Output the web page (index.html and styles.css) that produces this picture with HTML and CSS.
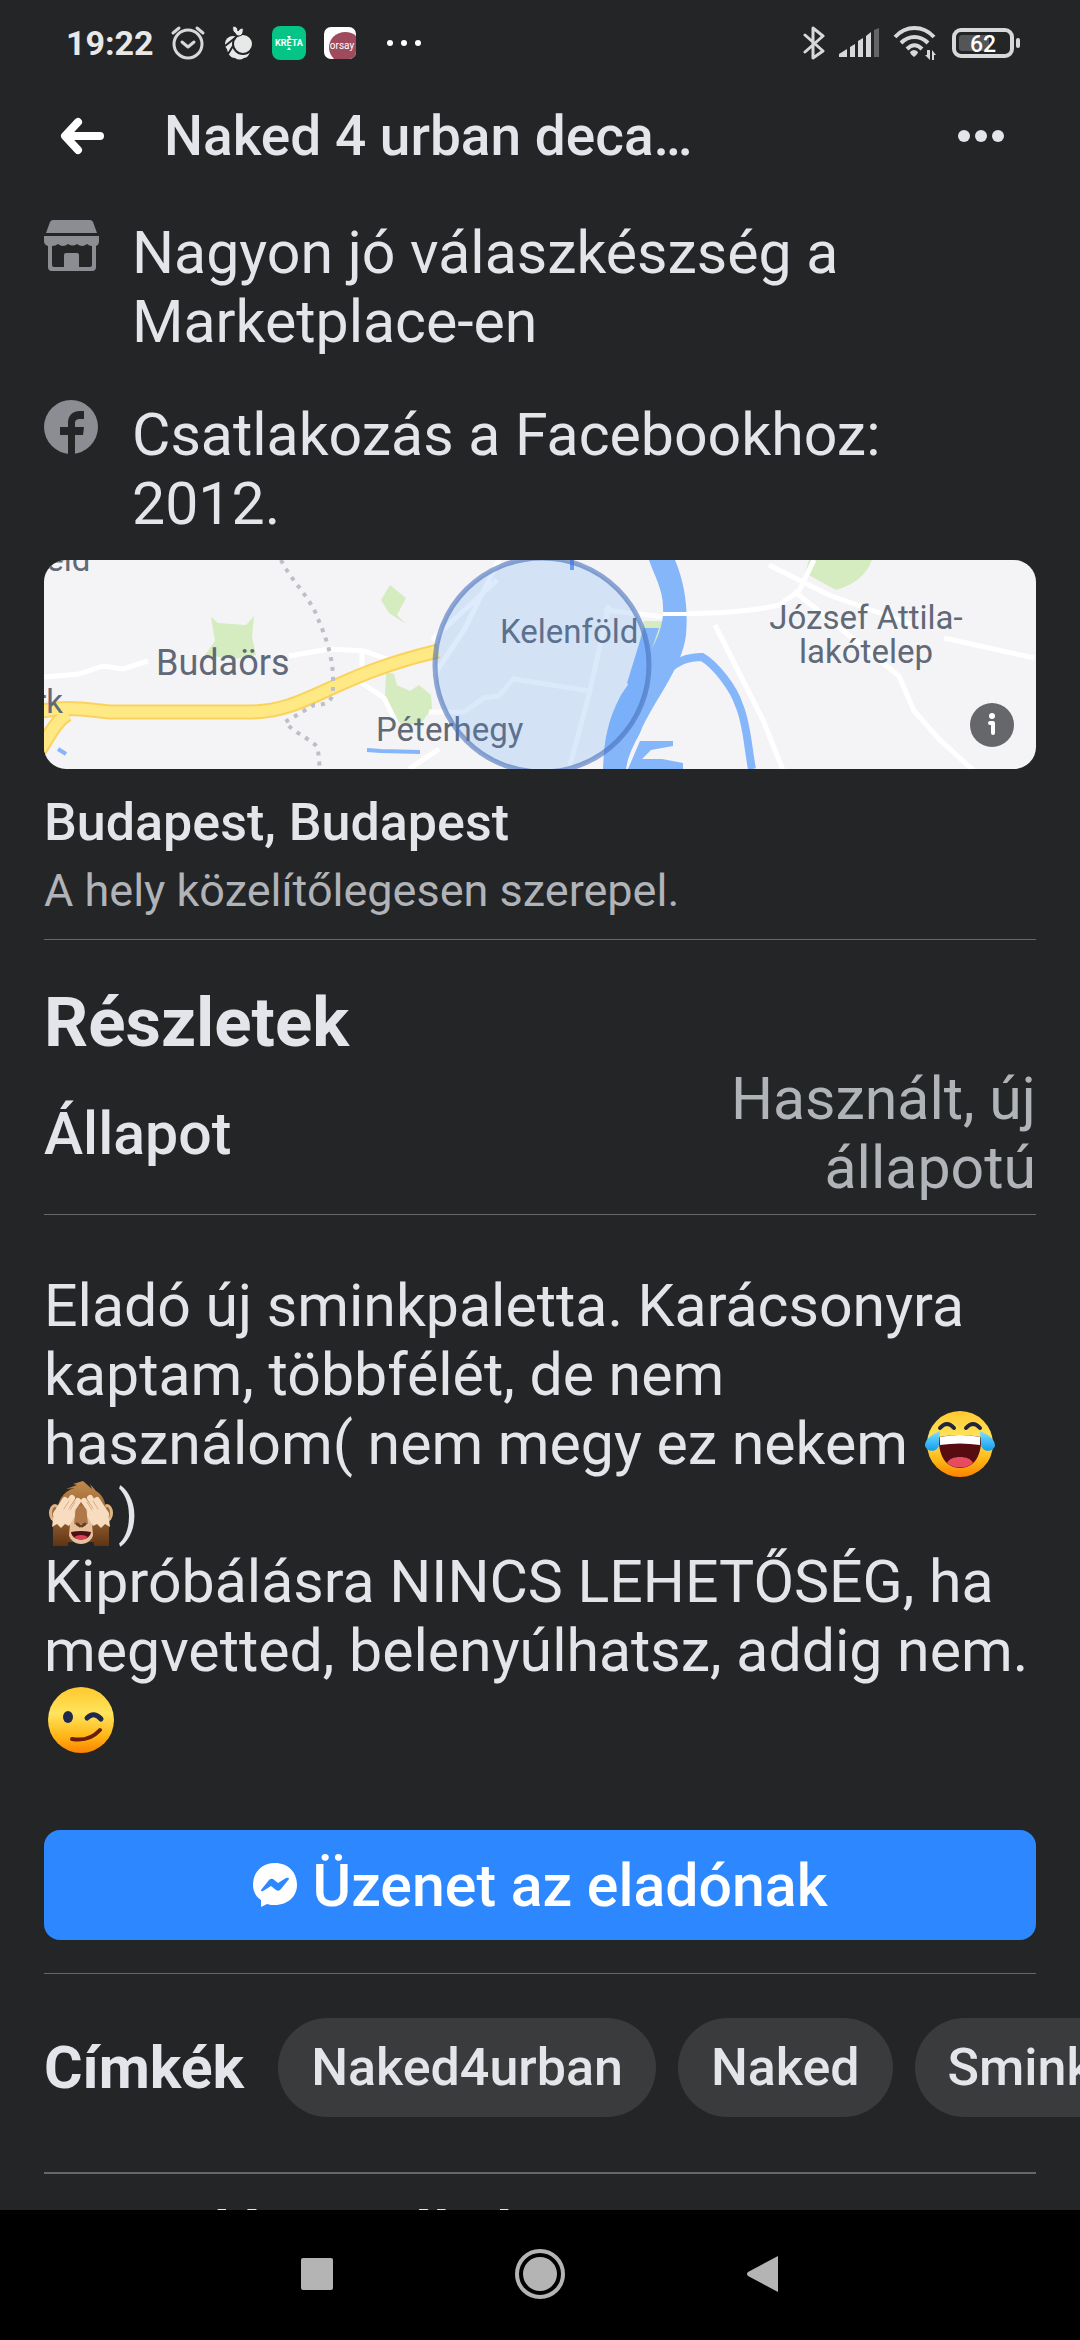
FILE: index.html
```html
<!DOCTYPE html>
<html lang="hu">
<head>
  <meta charset="UTF-8">
  <meta name="viewport" content="width=device-width, initial-scale=1">
  <title>Naked 4 urban decay</title>
  <link rel="stylesheet" href="styles.css">
</head>
<body>

  <div class="statusbar">
    <span class="clock">19:22</span>
    <svg class="alarm" viewBox="0 0 36 36" width="36" height="36" fill="none" stroke="#d8d8d8" stroke-width="3" stroke-linecap="round" stroke-linejoin="round">
      <circle cx="18" cy="19" r="14"/>
      <path d="M12 17l6 5 6-5M3 8l6-5M33 8l-6-5"/>
    </svg>
    <svg class="fruit" viewBox="0 0 28 34" width="28" height="34">
      <g fill="#e8e8e8">
        <circle cx="9" cy="18" r="8"/>
        <path d="M3 21c0 6 3 11 8 11 3 2 6 2 9 0 3 0 5-3 6-6z"/>
        <circle cx="19" cy="18" r="10" stroke="#242526" stroke-width="2"/>
        <path d="M9 0c3 0 5 2 5 5 1-2 3-3 5-3 1 4-1 8-4 8-2 0-3-1-4-3C9 6 8 3 9 0z" stroke="#242526" stroke-width="1"/>
      </g>
      <path d="M11 12L1 20M9 20l-5 8" fill="none" stroke="#242526" stroke-width="2"/>
    </svg>
    <svg class="app" viewBox="0 0 34 34" width="34" height="34">
      <rect width="34" height="34" rx="8" fill="#04c586"/>
      <text class="kreta" x="17" y="20" text-anchor="middle">KRÉTA</text>
      <path d="M15 10h4l-2 3zM17 21l2 3h-4z" fill="#fff"/>
    </svg>
    <svg class="app" viewBox="0 0 32 32" width="32" height="32">
      <defs><clipPath id="orsayClip"><rect width="32" height="32" rx="7"/></clipPath></defs>
      <g clip-path="url(#orsayClip)">
        <rect width="32" height="32" fill="#fff"/>
        <path d="M32 9C27 4 16 3 9 10c-6 7-5 16 1 22h22z" fill="#a04b5d"/>
        <text class="orsay" x="18" y="22" text-anchor="middle">orsay</text>
      </g>
    </svg>
    <svg class="more" viewBox="0 0 36 8" width="36" height="8" fill="#fff">
      <circle cx="4" cy="4" r="3"/><circle cx="18" cy="4" r="3"/><circle cx="32" cy="4" r="3"/>
    </svg>

    <span class="spacer"></span>

    <svg viewBox="0 0 22 34" width="22" height="34" fill="none" stroke="#d8d8d8" stroke-width="3" stroke-linejoin="round" stroke-linecap="round">
      <path d="M2 9l18 16-10 7V2l10 8L2 26"/>
    </svg>
    <svg viewBox="0 0 40 30" width="40" height="30" fill="#d8d8d8">
      <path d="M0 26l8-5v8H0zM11 19l5-3v13h-5zM19 13l5-3v19h-5zM27 8l5-4v25h-5z"/>
      <path d="M35 2l5-2v29h-5z" fill="#646567"/>
    </svg>
    <svg viewBox="0 0 43 34" width="43" height="34" fill="none" stroke="#d8d8d8" stroke-width="4">
      <path d="M2 11C13-1 30-1 41 11M8 17c8-8 19-8 27 0M14 23c5-5 10-5 15 0"/>
      <path d="M17 26q4-4 8 0 0 2-4 5-4-3-4-5z" fill="#d8d8d8" stroke="none"/>
      <path d="M34 24h3v10l-5-5h2zM39 34V24l4 5h-2v5z" fill="#d8d8d8" stroke="none"/>
    </svg>
    <svg class="battery" viewBox="0 0 68 30" width="68" height="30">
      <rect x="2" y="2" width="58" height="26" rx="7" fill="none" stroke="#d8d8d8" stroke-width="4"/>
      <rect x="7" y="7" width="30" height="16" rx="3" fill="#545557"/>
      <rect x="64" y="10" width="4" height="10" rx="2" fill="#d8d8d8"/>
      <text class="level" x="31" y="24" text-anchor="middle">62</text>
    </svg>
  </div>

  <header class="topbar">
    <button class="icon-btn" aria-label="Vissza">
      <svg viewBox="0 0 44 38" width="44" height="38" fill="none" stroke="#fff" stroke-width="8" stroke-linecap="round" stroke-linejoin="round">
        <path d="M40 19H8M18 5L5 19l13 14"/>
      </svg>
    </button>
    <h1>Naked 4 urban deca…</h1>
    <button class="icon-btn" aria-label="Továbbiak">
      <svg viewBox="0 0 46 12" width="46" height="12" fill="#e4e4eb">
        <circle cx="6" cy="6" r="6"/><circle cx="23" cy="6" r="6"/><circle cx="40" cy="6" r="6"/>
      </svg>
    </button>
  </header>

  <main>
    <ul class="seller">
      <li>
        <svg viewBox="0 0 55 55" width="55" height="55" fill="#8b8d92">
          <path d="M9 2h37q2 0 3 2l4 11H2L6 4q1-2 3-2zM0 18h55v5q0 4-3 5v21q0 4-4 4H8q-4 0-4-4V28q-4-1-4-5z"/>
          <path d="M8 28q4 0 6-2 5 4 10 0 5 3 9 0 5 4 10 0 2 2 5 2v19q0 2-2 2H35V37q0-2-2-2H22q-2 0-2 2v12H10q-2 0-2-2z" fill="#242526"/>
        </svg>
        <span>Nagyon jó válaszkészség a Marketplace-en</span>
      </li>
      <li>
        <svg viewBox="0 0 55 55" width="55" height="55">
          <circle cx="27" cy="27" r="27" fill="#8b8d92"/>
          <path d="M24 55V35h-8v-8h8v-4c0-8 5-12 12-12h4v8h-4c-3 0-5 1-5 4v4h9l-1 8h-8v20z" fill="#242526"/>
        </svg>
        <span>Csatlakozás a Facebookhoz: 2012.</span>
      </li>
    </ul>

    <div class="map">
      <svg viewBox="0 0 992 209" preserveAspectRatio="xMidYMid slice" role="img" aria-label="Térkép">
        <rect width="992" height="209" fill="#f4f4f6"/>
        <g fill="#d5ebc0">
          <path d="M167 57l7 6 28 2 8-9-2 21 4 18-22 4-29-4 10-14z"/>
          <path d="M346 25l16 13-9 17 9 9-17-11-8-13z"/>
          <path d="M342 112l8 2 3 11 13 6 9-6 12 10 1 13-10 14-19 4-10-10-8-19z"/>
          <path d="M765 0h63c-6 16-19 25-36 30l-31-17z"/>
          <path d="M600 61h22l-10 27-12 21-1 15-11-8z"/>
        </g>
        <g fill="none" stroke="#fff" stroke-width="5">
          <path d="M0 117l35-3 24-8 20 3 25-8M245 96l40-7 35 2 40 14M318 91v22M315 121l25 17 12 24M388 80l65-60M455 0L420 70l-30 45M365 209l30-20"/>
          <path d="M625 54c60 0 90-4 110-9l20-14 15-31M725 5l60 30 85 30M750 31l105 85 15 35 25 28 60 55M900 78l90 20M671 65l48 95 20 50"/>
          <path d="M385 152h35l20-14 15-2 14-17 77 12M565 45l-20 90-20 74M560 50l70 8" stroke-opacity=".8"/>
        </g>
        <!-- motorway -->
        <path d="M-8 152C22 146 36 149 66 152H205C264 152 284 117 394 91M24 154C12 160 4 178-8 196" fill="none" stroke="#fad25c" stroke-width="15"/>
        <path d="M-8 152C22 146 36 149 66 152H205C264 152 284 117 394 91M24 154C12 160 4 178-8 196" fill="none" stroke="#ffe985" stroke-width="11"/>
        <path d="M237 0c11 22 30 38 37 59 8 18 15 39 15 60 0 17 1 26-19 26l-29 17c11 13 33 20 33 28l2 20" fill="none" stroke="#bdbfc8" stroke-width="4" stroke-dasharray="4 6"/>
        <!-- river -->
        <g fill="#85b6fa">
          <path d="M607 0h24c11 26 13 52 11 75-4 34-34 68-46 98-7 13-12 23-14 36h-23c1-27 4-48 18-74 21-31 44-58 42-88 0-17-8-30-14-47z"/>
          <path d="M600 68h15l-13 38-11 27-8-10z"/>
          <path d="M596 181h33v5l-22 4-9 9h20l21 4v6h-55z"/>
        </g>
        <path d="M604 144c12-26 22-47 54-47 14 8 32 32 37 48 8 18 9 44 13 64" fill="none" stroke="#85b6fa" stroke-width="8"/>
        <path d="M14 189l8 5M323 190l14 1 39 1" fill="none" stroke="#85b6fa" stroke-width="4"/>
        <path d="M619 54h26" stroke="#fff" stroke-width="4"/>
        <path d="M528 0v10" stroke="#6f9df0" stroke-width="4"/>
        <g class="place">
          <text class="large" x="112" y="115">Budaörs</text>
          <text x="456" y="83">Kelenföld</text>
          <text x="332" y="181">Péterhegy</text>
          <text x="822" y="69" text-anchor="middle">József Attila-</text>
          <text x="822" y="103" text-anchor="middle">lakótelep</text>
          <text x="-16" y="11">field</text>
          <text x="-9" y="153">rk</text>
        </g>
        <circle cx="498" cy="105" r="107" fill="#4a96f5" fill-opacity=".19" stroke="#486fba" stroke-opacity=".6" stroke-width="5"/>
      </svg>
      <button class="info" aria-label="Információ">
        <svg viewBox="0 0 44 44" width="44" height="44">
          <circle cx="22" cy="22" r="22" fill="#65676b"/>
          <circle cx="22" cy="13" r="3" fill="#fff"/>
          <path d="M20 20h3v10" fill="none" stroke="#fff" stroke-width="4" stroke-linecap="round" stroke-linejoin="round"/>
        </svg>
      </button>
    </div>

    <section class="location">
      <h3>Budapest, Budapest</h3>
      <p>A hely közelítőlegesen szerepel.</p>
    </section>

    <section class="details">
      <h2>Részletek</h2>
      <dl>
        <dt>Állapot</dt>
        <dd>Használt, új állapotú</dd>
      </dl>
    </section>

    <p class="description">Eladó új sminkpaletta. Karácsonyra kaptam, többfélét, de nem használom( nem megy ez nekem <svg class="emoji" viewBox="0 0 70 66" role="img" aria-label="Könnyezve nevető arc">
        <defs>
          <linearGradient id="face" x1="0" y1="0" x2="0" y2="1">
            <stop offset="0" stop-color="#ffc92e"/><stop offset=".4" stop-color="#ffe45c"/><stop offset=".75" stop-color="#ffb515"/><stop offset="1" stop-color="#fb8200"/>
          </linearGradient>
          <linearGradient id="tear" x1="0" y1="0" x2="0" y2="1">
            <stop offset="0" stop-color="#7fe0ff"/><stop offset="1" stop-color="#109df0"/>
          </linearGradient>
        </defs>
        <circle cx="35" cy="33" r="33" fill="url(#face)"/>
        <path d="M14 26q20-4 42 0c1 17-6 31-21 31S13 43 14 26z" fill="#570d10"/>
        <path d="M15 26q20-4 40 0v8q-20-3-40 0z" fill="#fff"/>
        <path d="M22 52c3-8 23-8 26 0-7 6-19 6-26 0z" fill="#e74b60"/>
        <path d="M15 17q7-8 14 0M41 17q7-8 14 0" fill="none" stroke="#20243c" stroke-width="4" stroke-linecap="round"/>
        <path d="M15 20C3 25 0 30 0 35c2 7 13 6 14-1zM55 20c12 5 15 10 15 15-2 7-13 6-14-1z" fill="url(#tear)"/>
      </svg>
      <svg class="emoji" viewBox="0 0 70 66" role="img" aria-label="Szemét eltakaró majom">
        <defs>
          <linearGradient id="fur" x1="0" y1="0" x2="0" y2="1">
            <stop offset="0" stop-color="#c18a4d"/><stop offset="1" stop-color="#70401a"/>
          </linearGradient>
          <linearGradient id="arm" x1="0" y1="0" x2="0" y2="1">
            <stop offset="0" stop-color="#8a572b"/><stop offset="1" stop-color="#5f3413"/>
          </linearGradient>
        </defs>
        <ellipse cx="9" cy="33" rx="6" ry="9" fill="#dfb587"/><ellipse cx="61" cy="33" rx="6" ry="9" fill="#dfb587"/>
        <ellipse cx="9" cy="33" rx="3" ry="6" fill="#a16c3c"/><ellipse cx="61" cy="33" rx="3" ry="6" fill="#a16c3c"/>
        <path d="M11 35C11 18 20 10 29 8l-9 1 11-4-4-1 10-3 9 8-2-5 6 7c8 5 11 13 9 25v26H12z" fill="url(#fur)"/>
        <path d="M27 31q8-5 16 0l4 15c3 12-5 18-12 18s-15-6-12-18z" fill="#e6c29c"/>
        <path d="M30 26h10l2 18H28z" fill="#ae784a"/>
        <path d="M25 52q10-2 20 0c-1 10-19 10-20 0z" fill="#4f1015"/>
        <path d="M28 57q7-4 14 0-7 5-14 0z" fill="#dd4056"/>
        <path d="M31 44l3 2M39 44l-3 2" stroke="#6b3d25" stroke-width="3" stroke-linecap="round"/>
        <path d="M7 44h17l-2 22H7zM46 44h17v22H48z" fill="url(#arm)"/>
        <path d="M10 34L19 20M16 33l10-15M22 35l10-14M60 34L51 20M54 33L44 18M48 35L38 21" stroke="#f8dcc0" stroke-width="6" stroke-linecap="round"/>
        <path d="M8 31l20-3 1 8-6 10-4-2-4 4-4-4-5 3zM62 31l-20-3-1 8 6 10 4-2 4 4 4-4 5 3z" fill="#f8dcc0"/>
        <path d="M18 29l5-8M24 30l5-8M52 29l-5-8M46 30l-5-8" stroke="#d8ad85" stroke-width="1" stroke-linecap="round"/>
      </svg>)<br>
      Kipróbálásra NINCS LEHETŐSÉG, ha megvetted, belenyúlhatsz, addig nem.
      <svg class="emoji" viewBox="0 0 70 66" role="img" aria-label="Kacsintó arc">
        <circle cx="35" cy="33" r="33" fill="url(#face)"/>
        <ellipse cx="22" cy="30" rx="5" ry="6" fill="#20284e"/>
        <path d="M41 31q7-7 14 1" fill="none" stroke="#20284e" stroke-width="5" stroke-linecap="round"/>
        <path d="M26 52q17 3 28-9" fill="none" stroke="#6b1b0b" stroke-width="4" stroke-linecap="round"/>
      </svg></p>

    <div class="action">
      <button class="message-btn">
        <svg viewBox="0 0 44 44" width="44" height="44">
          <path d="M22 0C9 0 0 9 0 22c0 6 3 12 8 15v7l6-3c3 1 5 1 8 1 13 0 22-9 22-20C44 9 35 0 22 0z" fill="#fff"/>
          <path d="M8 27l8-10q2-2 4-1l5 4 8-5q3-1 3 1l-8 10q-2 3-5 1l-5-4-8 5q-2 1-2-1z" fill="#2d88ff"/>
        </svg>
        Üzenet az eladónak
      </button>
    </div>

    <section class="tags">
      <h2>Címkék</h2>
      <a href="#">Naked4urban</a>
      <a href="#">Naked</a>
      <a href="#">Sminkpaletta</a>
    </section>

    <h2 class="similar">Hasonló termékek</h2>
  </main>

  <nav class="navbar">
    <button aria-label="Legutóbbiak">
      <svg viewBox="0 0 32 32" width="32" height="32"><rect width="32" height="32" rx="2" fill="#b4b4b4"/></svg>
    </button>
    <button aria-label="Kezdőképernyő">
      <svg viewBox="0 0 50 50" width="50" height="50">
        <circle cx="25" cy="25" r="23" fill="none" stroke="#b4b4b4" stroke-width="4"/>
        <circle cx="25" cy="25" r="17" fill="#b4b4b4"/>
      </svg>
    </button>
    <button aria-label="Vissza">
      <svg viewBox="0 0 32 36" width="32" height="36"><path d="M31 0v36L1 20q-2-2 0-4z" fill="#b4b4b4"/></svg>
    </button>
  </nav>

</body>
</html>
```
FILE: styles.css
```css
* {
  box-sizing: border-box;
}
body {
  margin: 0;
  height: 100vh;
  display: flex;
  flex-direction: column;
  overflow: hidden;
  background: #242526;
  color: #e4e4eb;
  font-family: Roboto, sans-serif;
  font-size: 59px;
  line-height: 69px;
}
h1, h2, h3, p, ul, dl, dd {
  margin: 0;
  padding: 0;
}
svg {
  flex: none;
}
button {
  border: 0;
  padding: 0;
  background: none;
  color: inherit;
  font: inherit;
}

/* status bar */
.statusbar {
  display: flex;
  align-items: center;
  height: 86px;
  padding: 0 60px 0 66px;
  gap: 14px;
}
.clock {
  margin-right: 2px;
  font-size: 34px;
  line-height: 40px;
  font-weight: 700;
  color: #e8e8e8;
}
.fruit {
  margin-left: 4px;
  margin-right: 2px;
}
.app {
  margin-left: 4px;
}
.more {
  margin-left: 16px;
}
.spacer {
  flex: 1;
}
.kreta {
  font-size: 9px;
  font-weight: 700;
  fill: #fff;
}
.orsay {
  font-size: 10px;
  fill: #fff;
}
.battery {
  margin-left: 2px;
}
.level {
  font-size: 23px;
  font-weight: 500;
  fill: #fff;
}

/* title bar */
.topbar {
  display: flex;
  align-items: center;
  height: 100px;
  padding: 0 76px 0 60px;
}
.topbar h1 {
  flex: 1;
  padding-left: 60px;
  font-size: 55px;
  line-height: 64px;
  font-weight: 500;
}
.icon-btn {
  display: flex;
}

main {
  flex: 1;
  min-height: 0;
  overflow: hidden;
  padding: 32px 44px 0;
}
.seller {
  list-style: none;
}
.seller li {
  display: flex;
  gap: 33px;
  padding-right: 100px;
  margin-bottom: 44px;
}
.seller li:last-child {
  margin-bottom: 22px;
}

.map {
  position: relative;
  height: 209px;
  border-radius: 22px;
  overflow: hidden;
}
.map > svg {
  display: block;
  width: 100%;
  height: 100%;
}
.place {
  font-family: Roboto, sans-serif;
  font-size: 33px;
  font-weight: 400;
  fill: #616977;
}
.place .large {
  font-size: 36px;
}
.info {
  position: absolute;
  right: 22px;
  bottom: 22px;
  display: flex;
}

.location {
  padding: 22px 0 18px;
  border-bottom: 1px solid #65676b;
}
.location h3 {
  font-size: 52px;
  line-height: 64px;
  font-weight: 500;
}
.location p {
  margin-top: 6px;
  font-size: 45px;
  line-height: 60px;
  color: #b0b3b8;
}

.details {
  padding: 42px 0 12px;
  border-bottom: 1px solid #65676b;
}
.details h2 {
  font-size: 69px;
  line-height: 82px;
  font-weight: 700;
}
.details dl {
  display: flex;
  align-items: center;
  justify-content: space-between;
}
.details dt {
  font-weight: 500;
}
.details dd {
  width: 33%;
  text-align: right;
  color: #b0b3b8;
}

.description {
  padding: 56px 0 76px;
}
.emoji {
  width: 70px;
  height: 66px;
  margin: 0 2px;
  vertical-align: -13px;
}

.action {
  padding-bottom: 33px;
  border-bottom: 1px solid #65676b;
}
.message-btn {
  display: flex;
  align-items: center;
  justify-content: center;
  gap: 16px;
  width: 100%;
  height: 110px;
  border-radius: 16px;
  background: #2d88ff;
  color: #fff;
  font-weight: 500;
}

.tags {
  display: flex;
  align-items: center;
  gap: 22px;
  padding: 44px 0 55px;
  border-bottom: 2px solid #65676b;
}
.tags h2 {
  margin-right: 12px;
  font-size: 59px;
  font-weight: 700;
}
.tags a {
  flex: none;
  height: 99px;
  padding: 0 33px;
  border-radius: 50px;
  background: #3a3b3c;
  color: inherit;
  font-size: 52px;
  line-height: 99px;
  font-weight: 500;
  text-decoration: none;
}
.similar {
  padding-top: 24px;
  font-size: 59px;
  font-weight: 700;
}

/* system navigation */
.navbar {
  display: flex;
  align-items: center;
  justify-content: center;
  height: 130px;
  padding-bottom: 2px;
  gap: 182px;
  background: #000;
}
.navbar button {
  display: flex;
}
```
